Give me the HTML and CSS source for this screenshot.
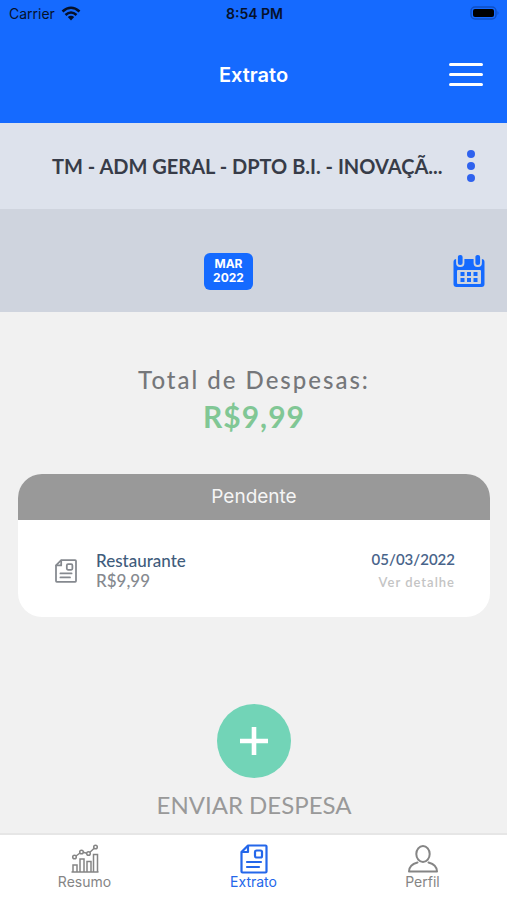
FILE: index.html
```html
<!DOCTYPE html>
<html lang="pt-BR">
<head>
<meta charset="utf-8">
<meta name="viewport" content="width=device-width, initial-scale=1">
<title>Extrato</title>
<link rel="stylesheet" href="styles.css">
</head>
<body>
<svg hidden>
  <symbol id="receipt" viewBox="0 0 28 30">
    <g fill="none" stroke="currentColor" stroke-width="2.200" stroke-linejoin="round" stroke-linecap="round">
      <path d="M8 1.500H25.500Q26.500 1.500 26.500 2.500V27.500Q26.500 28.500 25.500 28.500H2.500Q1.500 28.500 1.500 27.500V8Z"/>
      <path d="M8 2V8H2"/>
      <rect x="15" y="6.500" width="7" height="7" rx="1.500"/>
      <path d="M7 18H21M7 23H19"/>
    </g>
  </symbol>
</svg>
<div class="app">
  <header class="top">
    <div class="status">
      <div class="carrier">
        <span>Carrier</span>
        <svg class="wifi" viewBox="0 0 20 15" aria-hidden="true">
          <g fill="none" stroke="#06112b" stroke-width="2.600">
            <path d="M1.500 5.500Q10-2 18.500 5.500"/>
            <path d="M4.500 9Q10 4 15.500 9"/>
          </g>
          <path d="M6.800 11Q10 8.300 13.200 11L10 14.500Z" fill="#06112b"/>
        </svg>
      </div>
      <span class="clock">8:54 PM</span>
      <svg class="battery" viewBox="0 0 30 14" aria-hidden="true">
        <rect x="1" y="1" width="25" height="12" rx="4" fill="none" stroke="#0f4fc4" stroke-width="1.500"/>
        <rect x="3" y="3" width="21" height="8" rx="2" fill="#000"/>
        <path d="M27.500 5Q29.500 7 27.500 9Z" fill="#0f4fc4"/>
      </svg>
    </div>
    <div class="bar">
      <h1>Extrato</h1>
      <button class="icon-button" aria-label="Menu">
        <svg class="burger" viewBox="0 0 34 26"><path d="M1.500 2.500H32.500M1.500 12.500H32.500M1.500 22.500H32.500" stroke="#fff" stroke-width="3" stroke-linecap="round"/></svg>
      </button>
    </div>
  </header>

  <section class="account">
    <h2>TM - ADM GERAL - DPTO B.I. - INOVAÇÃ...</h2>
    <button class="icon-button" aria-label="Mais opções">
      <svg class="dots" viewBox="0 0 8 32"><g fill="#2f62ee"><circle cx="4" cy="4" r="4"/><circle cx="4" cy="16" r="4"/><circle cx="4" cy="28" r="4"/></g></svg>
    </button>
  </section>

  <section class="period">
    <button class="month">MAR<br>2022</button>
    <button class="icon-button" aria-label="Calendário">
      <svg class="calendar" viewBox="0 0 32 32">
        <rect x="0.500" y="3" width="31" height="28" rx="3" fill="#156aff"/>
        <g fill="#156aff" stroke="#cfd4de" stroke-width="1.800">
          <rect x="4" y="-2" width="6.500" height="12" rx="3"/>
          <rect x="21.500" y="-2" width="6.500" height="12" rx="3"/>
        </g>
        <rect x="4" y="14" width="24" height="14" rx="1" fill="#cfd4de"/>
        <g fill="#156aff">
          <rect x="7.500" y="16" width="4" height="4"/><rect x="14" y="16" width="4" height="4"/><rect x="20.500" y="16" width="4" height="4"/>
          <rect x="7.500" y="22" width="4" height="4"/><rect x="14" y="22" width="4" height="4"/><rect x="20.500" y="22" width="4" height="4"/>
        </g>
      </svg>
    </button>
  </section>

  <main>
    <section class="total">
      <p class="total-label">Total de Despesas:</p>
      <p class="total-value">R$9,99</p>
    </section>

    <section class="card">
      <h3>Pendente</h3>
      <article class="expense">
        <svg class="expense-icon" aria-hidden="true"><use href="#receipt"/></svg>
        <div class="expense-text">
          <p class="name">Restaurante</p>
          <p class="amount">R$9,99</p>
        </div>
        <div class="expense-meta">
          <time datetime="2022-03-05">05/03/2022</time>
          <a href="#detalhe">Ver detalhe</a>
        </div>
      </article>
    </section>

    <button class="send">
      <span class="plus"><svg viewBox="0 0 28 28" aria-hidden="true"><path d="M14 2V26M2 14H26" stroke="#fff" stroke-width="4.600" stroke-linecap="square"/></svg></span>
      <span>ENVIAR DESPESA</span>
    </button>
  </main>

  <nav class="tabs">
    <a href="#resumo">
      <svg viewBox="0 0 28 30" aria-hidden="true">
        <g fill="none" stroke="currentColor" stroke-width="1.500">
          <path d="M0.500 28H27.500"/>
          <path d="M2 28V21H6V28M9 28V15H13V28M16 28V17.500H20V28M22.500 28V10.500H26.500V28"/>
          <circle cx="3.500" cy="13" r="1.800"/><circle cx="10.500" cy="8" r="1.800"/><circle cx="17.500" cy="9.500" r="1.800"/><circle cx="24.500" cy="3" r="1.800"/>
          <path d="M5 12L9 9M12.300 8.300L15.700 9.200M18.900 8.200L23.200 4.300"/>
        </g>
      </svg>
      <span>Resumo</span>
    </a>
    <a href="#extrato" class="active" aria-current="page">
      <svg aria-hidden="true"><use href="#receipt"/></svg>
      <span>Extrato</span>
    </a>
    <a href="#perfil">
      <svg class="person" viewBox="0 0 30 30" aria-hidden="true">
        <g fill="none" stroke="currentColor" stroke-width="2" stroke-linejoin="round">
          <ellipse cx="15" cy="10" rx="6.700" ry="8"/>
          <path d="M9.500 18.500C4 20 1 22.500 1 27.500H29C29 22.500 26 20 20.500 18.500" stroke-linecap="round"/>
        </g>
      </svg>
      <span>Perfil</span>
    </a>
  </nav>
</div>
</body>
</html>
```
FILE: styles.css
```css
* {
  box-sizing: border-box;
}

body,
h1,
h2,
h3,
p {
  margin: 0;
}

body {
  background: #f1f1f1;
  font-family: Lato, sans-serif;
}

button {
  border: 0;
  padding: 0;
  background: none;
  font: inherit;
  color: inherit;
  cursor: pointer;
}

a {
  color: inherit;
  text-decoration: none;
}

svg {
  display: block;
}

svg[hidden] {
  display: none;
}

.app {
  display: flex;
  flex-direction: column;
  min-height: 100vh;
}

/* Header */
.top {
  background: #156aff;
  font-family: Inter, sans-serif;
}

.status {
  display: grid;
  grid-template-columns: 1fr auto 1fr;
  align-items: center;
  height: 26px;
  padding: 0 7px 0 9px;
  color: #06112b;
  font-size: 14px;
}

.carrier {
  display: flex;
  align-items: center;
  gap: 6px;
}

.wifi {
  width: 20px;
  height: 15px;
}

.clock {
  font-weight: 600;
}

.battery {
  width: 30px;
  height: 14px;
  justify-self: end;
}

.bar {
  display: grid;
  grid-template-columns: 1fr auto 1fr;
  align-items: center;
  height: 97px;
  padding: 0 24px;
  color: #fff;
}

.bar h1 {
  grid-column: 2;
  font-size: 20px;
  font-weight: 600;
}

.bar .icon-button {
  justify-self: end;
}

.burger {
  width: 34px;
  height: 26px;
}

/* Account and period */
.account {
  display: flex;
  align-items: center;
  gap: 12px;
  height: 86px;
  padding: 0 32px 0 52px;
  background: #dde2ec;
}

.account h2 {
  flex: 1;
  color: #373c48;
  font-size: 20px;
  font-weight: 700;
}

.dots {
  width: 8px;
  height: 32px;
}

.period {
  display: grid;
  grid-template-columns: 1fr auto;
  align-items: center;
  height: 103px;
  padding: 22px 22px 0 4px;
  background: #cfd4de;
}

.month {
  justify-self: center;
  padding: 4px 9px 5px;
  border-radius: 6px;
  background: #156aff;
  color: #fff;
  font: 700 12px/14px Inter, sans-serif;
}

.calendar {
  width: 32px;
  height: 32px;
  overflow: visible;
}

/* Content */
main {
  flex: 1;
  display: flex;
  flex-direction: column;
  padding: 50px 17px 0 18px;
}

.total {
  margin-bottom: 40px;
  text-align: center;
  line-height: 36px;
}

.total-label {
  color: #75777a;
  font-size: 24px;
  font-weight: 500;
  letter-spacing: 2px;
}

.total-value {
  color: #81c795;
  font-size: 30px;
  font-weight: 700;
  letter-spacing: 1px;
}

.card {
  overflow: hidden;
  border-radius: 24px;
  background: #fff;
}

.card h3 {
  background: #999;
  color: #f5f5f5;
  font: 400 19px/46px Inter, sans-serif;
  text-align: center;
}

.expense {
  display: flex;
  align-items: center;
  gap: 18px;
  padding: 28px 35px 23px 36px;
}

.expense-icon {
  width: 24px;
  height: 24px;
  color: #85898f;
}

.expense-text {
  flex: 1;
  font-size: 17px;
  font-weight: 500;
  line-height: 20px;
}

.name {
  color: #3f5c7c;
}

.amount {
  color: #85898f;
}

.expense-meta {
  display: flex;
  flex-direction: column;
  align-items: flex-end;
  font-weight: 600;
  line-height: 23px;
}

.expense-meta time {
  color: #49648a;
  font-size: 15px;
}

.expense-meta a {
  color: #c4c4c4;
  font-size: 13px;
  letter-spacing: 1px;
}

.send {
  display: flex;
  flex-direction: column;
  align-items: center;
  align-self: center;
  gap: 12px;
  margin-top: 87px;
  padding-bottom: 12px;
  color: #999;
  font-size: 24px;
  line-height: 30px;
}

.plus {
  display: grid;
  place-items: center;
  width: 74px;
  height: 74px;
  border-radius: 50%;
  background: #72d4b7;
}

.plus svg {
  width: 28px;
  height: 28px;
}

/* Tab bar */
.tabs {
  display: grid;
  grid-template-columns: repeat(3, 1fr);
  height: 67px;
  padding-top: 9px;
  border-top: 2px solid #e6e6e6;
  background: #fff;
  color: #858585;
  font: 400 14px/16px Inter, sans-serif;
}

.tabs a {
  display: flex;
  flex-direction: column;
  align-items: center;
}

.tabs svg {
  width: 28px;
  height: 30px;
}

.tabs .person {
  width: 30px;
}

.tabs .active {
  color: #2467ea;
}
```
